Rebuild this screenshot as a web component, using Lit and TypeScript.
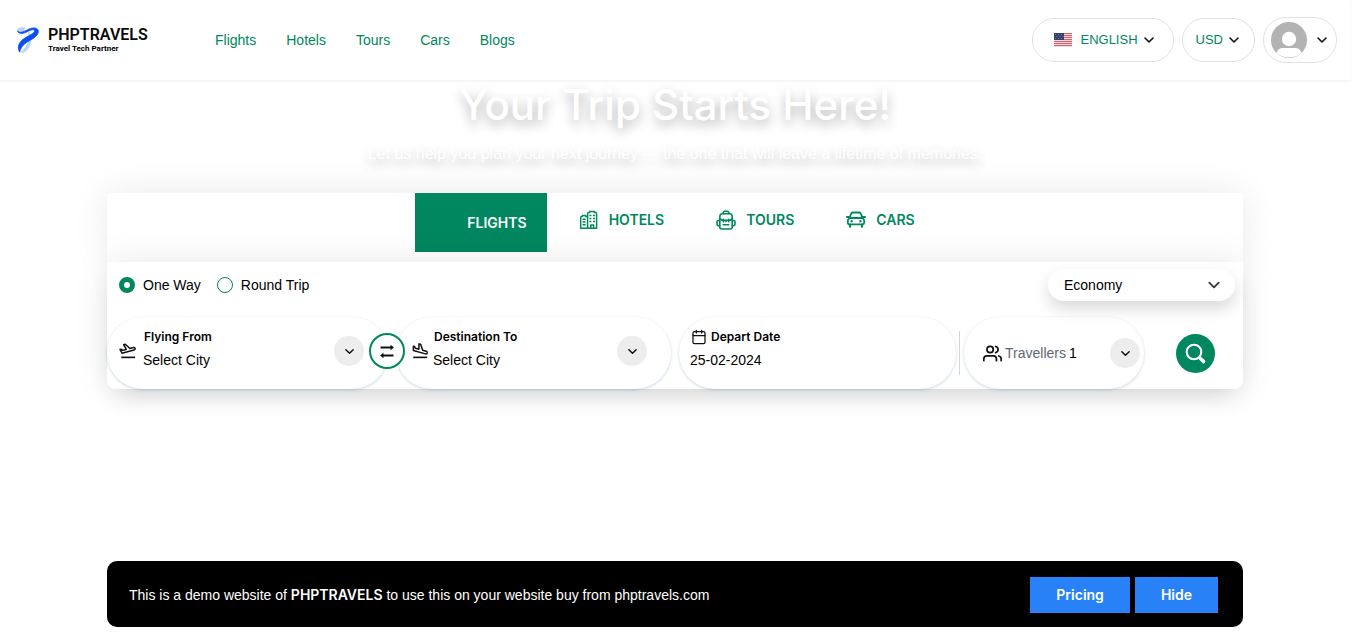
import { LitElement, html, css, svg } from "lit";
import { customElement, state } from "lit/decorators.js";

const chevron = (size: number) => html`
  <svg class="chevron" width=${size} height=${size} viewBox="0 0 12 12" fill="none" stroke="currentColor" stroke-width="1.6" stroke-linecap="round" stroke-linejoin="round" aria-hidden="true">
    <path d="M2 4l4 4 4-4" />
  </svg>`;

const hotelIcon = html`
  <svg width="20" height="20" viewBox="0 0 20 20" fill="none" stroke="currentColor" stroke-width="1.5" stroke-linejoin="round" aria-hidden="true">
    <path d="M8.6 18.2V3.6q0-1.2 1.2-1.2h.9V1.6h4.8v.8h.9q1.2 0 1.2 1.2v14.6z" />
    <path d="M8.6 18.2H1.7V7.4q0-1 1-1h.7v-.9h3.2v.9h2" />
    <path d="M11.8 18v-3h2.8v3M3.6 9.2h3M3.6 12h3M3.6 14.8h3M10.4 5.6h2M14 5.6h2M10.4 8.6h2M14 8.6h2M10.4 11.6h2M14 11.6h2" />
  </svg>`;

const tourIcon = html`
  <svg width="20" height="20" viewBox="0 0 20 20" fill="none" stroke="currentColor" stroke-width="1.6" stroke-linejoin="round" stroke-linecap="round" aria-hidden="true">
    <path d="M7.2 3.6V3q0-1.8 1.600-1.800h2.400Q12.800 1.200 12.800 3v.6" />
    <path d="M6.400 3.700h7.200q2.600 0 2.600 3V17q0 2-2 2H5.800q-2 0-2-2V6.700q0-3 2.600-3z" />
    <path d="M3.600 10.500H2.500q-1.500 0-1.500 1.500v2.200q0 1.500 1.500 1.500h1.100M16.400 10.500h1.100q1.500 0 1.500 1.500v2.200q0 1.500-1.500 1.500h-1.100" />
    <path d="M4 8.700q1.500 1.700 3.300 1.700h5.400q1.800 0 3.300-1.700M7.300 9.200v2.600M10 10v1.600M12.700 9.200v2.600M7.200 14.700h5.600" />
  </svg>`;

const carIcon = html`
  <svg width="20" height="20" viewBox="0 0 20 20" fill="none" stroke="currentColor" stroke-width="1.8" stroke-linejoin="round" stroke-linecap="round" aria-hidden="true">
    <path d="M3.600 8l1.500-4.200q.4-1.300 1.700-1.300h6.400q1.300 0 1.700 1.300L16.400 8M.9 7h2M17.100 7h2" />
    <path d="M3.600 8h12.800q1.800 1.200 1.800 3v1.800q0 1.500-1.500 1.500H3.300q-1.500 0-1.500-1.500V11q0-1.800 1.800-3z" />
    <path d="M4 14.500v2.200M16 14.500v2.200" stroke-width="2.200" />
    <path d="M5.600 11.200h.01M14.400 11.200h.01" stroke-width="2.400" />
  </svg>`;

const takeoffIcon = html`
  <svg width="18" height="18" viewBox="0 0 24 24" fill="none" stroke="#111" stroke-width="2" stroke-linejoin="round" aria-hidden="true">
    <path d="M3 20.500h18.500" stroke-width="2.200" />
    <path d="M21.500 8.500c-.3-1-1.300-1.500-2.300-1.200L14.600 8.600 8.400 3 6.200 3.600l3.400 6.300-4.600 1.300-2-1.500-1.600.4 2.700 4.900L20 10.700c1.100-.3 1.800-1.200 1.500-2.200z" />
  </svg>`;

const landingIcon = html`
  <svg width="18" height="18" viewBox="0 0 24 24" fill="none" stroke="#111" stroke-width="2" stroke-linejoin="round" aria-hidden="true">
    <path d="M3 20.500h18.500" stroke-width="2.200" />
    <path d="M19.300 15.800c1 .3 2-.3 2.300-1.200.3-1-.3-1.900-1.300-2.200l-4.700-1.300-2.700-8L10.600 2.500l-.1 7.200-4.700-1.300-1-2.300-1.700-.4.100 5.600z" />
  </svg>`;

const flagStripes = [0, 2, 4, 6, 8, 10, 12];
const flagStars = [[1, 1], [4, 1], [7, 1], [2.5, 3], [5.5, 3], [8.5, 3], [1, 5], [4, 5], [7, 5]];

@customElement("app-root")
export class AppRoot extends LitElement {
  @state() private trip = "one";
  @state() private banner = true;

  static styles = css`
    :host {
      display: block;
      font-family: "Liberation Sans", Arial, sans-serif;
      font-size: 14px;
      line-height: 20px;
      color: #000;
      background: #fff;
    }
    *, *::before, *::after { box-sizing: border-box; }
    button, input, select { font: inherit; color: inherit; margin: 0; }
    button { cursor: pointer; padding: 0; border: 0; background: none; }
    a { color: inherit; text-decoration: none; }
    svg { flex: none; display: block; }

    .page { min-height: 100vh; margin-right: 16px; display: flex; flex-direction: column; }
    .header {
      height: 80px;
      padding: 0 13px 0 16px;
      display: flex;
      align-items: center;
      background: #fff;
      box-shadow: 0 1px 3px rgba(0, 0, 0, 0.07);
      position: relative;
      z-index: 1;
    }
    .logo { display: flex; align-items: center; gap: 8px; width: 199px; font-family: Roboto, sans-serif; }
    .brand { display: block; font-size: 16px; line-height: 18px; font-weight: 600; color: #0b0b0b; }
    .tagline { display: block; font-size: 8px; line-height: 10px; font-weight: 700; }
    .nav { display: flex; gap: 30px; color: #00875f; flex: 1; }
    .tools { display: flex; align-items: center; gap: 8px; }
    .tool {
      display: flex;
      align-items: center;
      justify-content: center;
      border: 1px solid #dee2e6;
      border-radius: 24px;
      height: 44px;
      padding: 0 14px 0 13px;
      gap: 5px;
      color: #00875f;
      font-size: 13px;
    }
    .language { padding: 0 18px 0 21px; }
    .flag { margin-right: 3px; }
    .account { height: 46px; padding: 0 8px 0 7px; gap: 9px; }
    .chevron { color: #111; }

    .container { width: 100%; max-width: 1136px; margin: 0 auto; }
    .hero { text-align: center; color: #fff; }
    .title {
      margin: 0;
      font-family: Inter, sans-serif;
      font-size: 42px;
      line-height: 50px;
      font-weight: 500;
      text-shadow: 0 5px 12px rgba(0, 0, 0, 0.3);
    }
    .lead { margin: 12px 0 27px; font-size: 16px; line-height: 24px; text-shadow: 0 5px 12px rgba(0, 0, 0, 0.3); }

    .tabs {
      display: flex;
      justify-content: center;
      height: 69px;
      background: #fff;
      border-radius: 4px 4px 0 0;
      box-shadow: 0 0 36px rgba(0, 0, 0, 0.09);
    }
    .tab {
      height: 54px;
      display: flex;
      align-items: center;
      gap: 10px;
      padding: 0 20px 0 32px;
      color: #00875f;
      font-family: Inter, sans-serif;
      font-weight: 600;
    }
    .tab.active { height: 59px; padding-left: 52px; background: #00875f; color: #fff; }

    .form {
      display: block;
      background: #fff;
      position: relative;
      border-radius: 0 0 8px 8px;
      box-shadow: 0 0 36px rgba(0, 0, 0, 0.09), 0 12px 24px -8px rgba(0, 0, 0, 0.14);
    }
    .options { display: flex; align-items: center; height: 55px; padding: 0 8px 10px 12px; gap: 16px; }
    .choice { display: flex; align-items: center; gap: 8px; }
    .radio {
      appearance: none;
      width: 16px;
      height: 16px;
      border: 1px solid #00875f;
      border-radius: 50%;
      background: #fff;
    }
    .radio:checked { border-width: 5px; }
    .cabin { margin-left: auto; position: relative; display: flex; align-items: center; width: 187px; }
    .cabin-select {
      appearance: none;
      width: 100%;
      height: 32px;
      padding: 0 16px;
      border: 0;
      border-radius: 16px;
      background: #fff;
      box-shadow: 0 8px 16px rgba(0, 0, 0, 0.15);
    }
    .cabin .chevron { position: absolute; right: 14px; pointer-events: none; color: #343a40; }

    .fields {
      display: grid;
      grid-template-columns: 281fr 275fr 277fr 180fr 91px;
      gap: 8px;
    }
    .field {
      height: 72px;
      border-radius: 36px;
      box-shadow: 0 1px 3px rgba(50, 110, 160, 0.28);
      display: flex;
      align-items: center;
      padding: 0 24px 4px 12px;
      gap: 6px;
      position: relative;
    }
    .field.to { padding-left: 15px; gap: 4px; }
    .field.date { padding-left: 11px; }
    .field.guests { padding: 0 4px 0 19px; gap: 3px; }
    .text { flex: 1; min-width: 0; display: flex; flex-direction: column; gap: 2px; padding-bottom: 4px; }
    .caption {
      display: flex;
      align-items: center;
      gap: 4px;
      padding-left: 1px;
      font-family: Inter, sans-serif;
      font-size: 12px;
      font-weight: 600;
    }
    .control { appearance: none; width: 100%; height: 22px; padding: 0; border: 0; background: none; outline: none; }
    .round {
      flex: none;
      width: 30px;
      height: 30px;
      border-radius: 50%;
      background: #ededed;
      display: grid;
      place-items: center;
      pointer-events: none;
    }
    .swap {
      position: absolute;
      left: -27px;
      top: 16px;
      width: 36px;
      height: 36px;
      border: 2px solid #00875f;
      border-radius: 50%;
      background: #fff;
      display: grid;
      place-items: center;
    }
    .divider { position: absolute; left: -5px; top: 14px; width: 1px; height: 44px; background: #d5d5d5; }
    .guest-label { color: #5d6774; }
    .guest-count { flex: 1; text-align: left; }
    .search {
      width: 39px;
      height: 39px;
      margin-right: 4px;
      border-radius: 50%;
      background: #00875f;
      color: #fff;
      display: grid;
      place-items: center;
      place-self: center;
    }

    .banner {
      margin-top: auto;
      margin-bottom: 16px;
      padding: 16px 25px 14px 22px;
      border-radius: 10px;
      background: #000;
      color: #fff;
      display: flex;
      align-items: center;
      gap: 5px;
    }
    .message { flex: 1; margin: 0; }
    .action {
      height: 36px;
      padding: 0 26px;
      background: #2881f7;
      font-family: Inter, sans-serif;
      font-weight: 600;
      display: flex;
      align-items: center;
    }
    .strong { font-family: Inter, sans-serif; font-weight: 600; }
  `;

  render() {
    return html`
      <div class="page">
        <header class="header">
          <a class="logo" href="#">
            <svg width="24" height="28" viewBox="0 0 24 28" fill="none" aria-hidden="true">
              <path d="M1 5.500C1 1.500 5 .6 9 1.500l-1 4z" fill="#b8d4fb" />
              <path d="M12.500 5.500C17 9 16 14 14 19c-1.500 4-3.500 6.500-7 8l-2.500-.3C8.500 23 10 20 11.500 17c1.500-3.500 2-7 .5-9z" fill="#b8d4fb" />
              <path d="M1.500 5C4 7.500 8 5.500 11.500 3.700 15 1.800 19.500 1.200 21.500 3.200c2 2.300.5 6-4 9-6 3.800-12.500 6.500-13.800 14C.5 20 3.500 15.500 9 12c5-3.200 9.500-4.700 9.700-7 0-2-4-1.200-7 .5C8 7.700 2.500 8.500 1.500 5z" fill="#0b50ee" stroke="#0b50ee" stroke-width=".8" stroke-linejoin="round" />
            </svg>
            <span>
              <span class="brand">PHPTRAVELS</span>
              <span class="tagline">Travel Tech Partner</span>
            </span>
          </a>
          <nav class="nav">
            ${["Flights", "Hotels", "Tours", "Cars", "Blogs"].map((n) => html`<a href="#">${n}</a>`)}
          </nav>
          <div class="tools">
            <button class="tool language">
              <svg class="flag" width="18" height="14" viewBox="0 0 18 14" aria-hidden="true">
                <rect width="18" height="14" fill="#f3d9dc" />
                ${flagStripes.map((y) => svg`<rect y=${y} width="18" height="1" fill="#d4626c" />`)}
                <rect width="10" height="7" fill="#34416f" />
                ${flagStars.map(([x, y]) => svg`<rect x=${x} y=${y} width=".8" height=".8" fill="#8f9abb" />`)}
              </svg>
              ENGLISH ${chevron(12)}
            </button>
            <button class="tool">USD ${chevron(12)}</button>
            <button class="tool account" aria-label="Account">
              <svg width="36" height="36" viewBox="0 0 36 36" aria-hidden="true">
                <circle cx="18" cy="18" r="18" fill="#b3b3b3" />
                <circle cx="18" cy="17" r="7.200" fill="#fff" />
                <path d="M5.500 31q1.500-5 6.500-5h12q5 0 6.500 5Q25 35.600 18 35.600T5.500 31z" fill="#fff" />
              </svg>
              ${chevron(12)}
            </button>
          </div>
        </header>

        <main class="container">
          <section class="hero">
            <h1 class="title">Your Trip Starts Here!</h1>
            <p class="lead">Let us help you plan your next journey — the one that will leave a lifetime of memories.</p>
          </section>
          <nav class="tabs">
            <button class="tab active">FLIGHTS</button>
            <button class="tab">${hotelIcon} HOTELS</button>
            <button class="tab">${tourIcon} TOURS</button>
            <button class="tab">${carIcon} CARS</button>
          </nav>
          <form class="form" @submit=${(e: Event) => e.preventDefault()}>
            <div class="options">
              <label class="choice">
                <input class="radio" type="radio" name="trip" .checked=${this.trip === "one"} @change=${() => (this.trip = "one")} />
                One Way
              </label>
              <label class="choice">
                <input class="radio" type="radio" name="trip" .checked=${this.trip === "round"} @change=${() => (this.trip = "round")} />
                Round Trip
              </label>
              <div class="cabin">
                <select class="cabin-select" aria-label="Cabin class">
                  <option>Economy</option>
                  <option>Business</option>
                  <option>First</option>
                </select>
                ${chevron(14)}
              </div>
            </div>
            <div class="fields">
              <div class="field">
                ${takeoffIcon}
                <div class="text">
                  <label class="caption" for="from">Flying From</label>
                  <select class="control" id="from"><option>Select City</option></select>
                </div>
                <span class="round">${chevron(11)}</span>
              </div>
              <div class="field to">
                <button class="swap" type="button" aria-label="Swap cities">
                  <svg width="16" height="16" viewBox="0 0 16 16" fill="none" stroke="#111" stroke-width="1.800" aria-hidden="true">
                    <path d="M1.500 4.500h11M3.500 12.500h11" />
                    <path d="M11.500 1.800L15 4.500l-3.500 2.700zM4.500 9.800L1 12.500l3.500 2.700z" fill="#111" stroke="none" />
                  </svg>
                </button>
                ${landingIcon}
                <div class="text">
                  <label class="caption" for="to">Destination To</label>
                  <select class="control" id="to"><option>Select City</option></select>
                </div>
                <span class="round">${chevron(11)}</span>
              </div>
              <div class="field date">
                <div class="text">
                  <label class="caption" for="date">
                    <svg width="16" height="16" viewBox="0 0 24 24" fill="none" stroke="#111" stroke-width="1.900" stroke-linecap="round" stroke-linejoin="round" aria-hidden="true">
                      <rect x="3" y="4" width="18" height="18" rx="2" />
                      <path d="M16 2v4M8 2v4M3 10h18" />
                    </svg>
                    Depart Date
                  </label>
                  <input class="control" id="date" type="text" value="25-02-2024" />
                </div>
              </div>
              <button class="field guests" type="button">
                <span class="divider"></span>
                <svg width="19" height="19" viewBox="0 0 24 24" fill="none" stroke="#111" stroke-width="2.200" stroke-linecap="round" stroke-linejoin="round" aria-hidden="true">
                  <path d="M17 21v-2a4 4 0 0 0-4-4H5a4 4 0 0 0-4 4v2M23 21v-2a4 4 0 0 0-3-3.870M16 3.130a4 4 0 0 1 0 7.750" />
                  <circle cx="9" cy="7" r="4" />
                </svg>
                <span class="guest-label">Travellers</span>
                <span class="guest-count">1</span>
                <span class="round">${chevron(11)}</span>
              </button>
              <button class="search" type="submit" aria-label="Search">
                <svg width="21" height="21" viewBox="0 0 21 21" fill="none" stroke="currentColor" stroke-linecap="round" aria-hidden="true">
                  <circle cx="9" cy="9" r="7.300" stroke-width="2.100" />
                  <path d="M14.300 14.300l1 1" stroke-width="2" />
                  <path d="M15.800 15.800l2.700 2.700" stroke-width="3.600" />
                </svg>
              </button>
            </div>
          </form>
        </main>

        ${this.banner
          ? html`<aside class="container banner">
              <p class="message">This is a demo website of <b class="strong">PHPTRAVELS</b> to use this on your website buy from phptravels.com</p>
              <a class="action" href="#">Pricing</a>
              <button class="action" @click=${() => (this.banner = false)}>Hide</button>
            </aside>`
          : ""}
      </div>
    `;
  }
}
